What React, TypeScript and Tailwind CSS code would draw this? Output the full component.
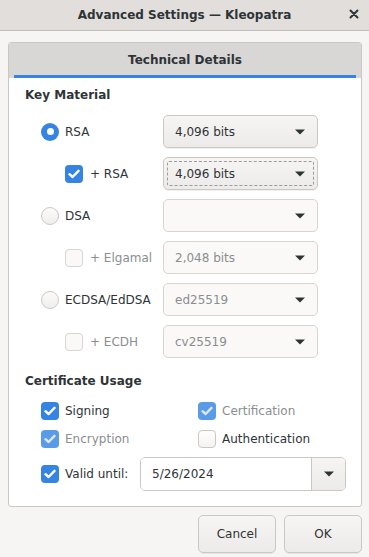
import React from 'react';

const Arrow = () => (
  <svg width="10" height="6" viewBox="0 0 10 6" className="shrink-0">
    <polygon points="0,0.5 10,0.5 5,5.5" fill="#2e3436" />
  </svg>
);

const Check = ({ checked, disabled }: { checked?: boolean; disabled?: boolean }) => {
  if (checked) {
    return (
      <div
        className={`w-[18px] h-[18px] rounded-[4px] flex items-center justify-center shrink-0 ${
          disabled ? 'bg-[#5a9be8]' : 'bg-[#3584e4]'
        }`}
      >
        <svg width="12" height="10" viewBox="0 0 12 10">
          <path
            d="M1.5 5.2 L4.6 8 L10.5 1.8"
            fill="none"
            stroke={disabled ? '#dbe8f9' : '#ffffff'}
            strokeWidth="2.4"
            strokeLinecap="round"
            strokeLinejoin="round"
          />
        </svg>
      </div>
    );
  }
  return (
    <div
      className={`w-[18px] h-[18px] rounded-[4px] border shrink-0 ${
        disabled ? 'border-[#d8d4d0] bg-[#faf9f8]' : 'border-[#cdc7c2] bg-gradient-to-b from-white to-[#f4f3f2]'
      }`}
    />
  );
};

const Radio = ({ checked }: { checked?: boolean }) =>
  checked ? (
    <div className="w-[18px] h-[18px] rounded-full bg-[#3584e4] flex items-center justify-center shrink-0">
      <div className="w-[7px] h-[7px] rounded-full bg-white" />
    </div>
  ) : (
    <div className="w-[18px] h-[18px] rounded-full border border-[#cdc7c2] bg-gradient-to-b from-[#fbfbfa] to-[#efeeec] shrink-0" />
  );

const Combo = ({ value, disabled, focused }: { value: string; disabled?: boolean; focused?: boolean }) => (
  <div
    className={`relative h-[33px] w-[155px] rounded-[5px] border flex items-center justify-between pl-[11px] pr-[12px] ${
      disabled
        ? 'border-[#d8d4d0] bg-[#faf9f8] text-[#8b8e8f]'
        : 'border-[#cdc7c2] bg-gradient-to-b from-[#f6f5f4] to-[#edebe9] text-[#2e3436] shadow-[0_1px_0_rgba(0,0,0,0.06)]'
    }`}
  >
    <span>{value}</span>
    <Arrow />
    {focused && <div className="absolute inset-[3px] border border-dashed border-[#9a9c9d] rounded-[2px]" />}
  </div>
);

export default function App() {
  return (
    <div className="w-[369px] h-[557px] bg-[#f6f5f4] font-['DejaVu_Sans',sans-serif] text-[12px] text-[#2e3436]">
      <div className="relative h-[31px] bg-[#e1dedb] border-b border-[#c0bdb9] flex items-center justify-center">
        <span className="font-bold">Advanced Settings — Kleopatra</span>
        <div className="absolute right-[10px] top-[9px]">
          <svg width="10" height="10" viewBox="0 0 10 10">
            <path d="M1.5 1.5 L8.5 8.5 M8.5 1.5 L1.5 8.5" stroke="#2e3436" strokeWidth="2" strokeLinecap="round" />
          </svg>
        </div>
      </div>

      <div className="ml-[8px] mt-[11px] w-[354px] border border-[#cdc7c2] rounded-[3px] bg-white overflow-hidden">
        <div className="h-[35px] bg-[#d8d7d5] px-[5px] flex">
          <div className="flex-1 border-b-[3px] border-[#3584e4] flex items-center justify-center font-bold pt-[1px]">
            Technical Details
          </div>
        </div>

        <div className="pl-[16px] pt-[8px] pb-[15px]">
          <div className="h-[18px] flex items-center font-bold">Key Material</div>

          <div className="ml-[16px] mt-[11px] grid grid-cols-[122px_155px] gap-y-[9px]">
            <div className="flex items-center gap-[6px]">
              <Radio checked />
              <span>RSA</span>
            </div>
            <Combo value="4,096 bits" />

            <div className="flex items-center gap-[7px] pl-[24px]">
              <Check checked />
              <span>+ RSA</span>
            </div>
            <Combo value="4,096 bits" focused />

            <div className="flex items-center gap-[6px]">
              <Radio />
              <span>DSA</span>
            </div>
            <Combo value="" disabled />

            <div className="flex items-center gap-[7px] pl-[24px]">
              <Check disabled />
              <span className="text-[#8b8e8f]">+ Elgamal</span>
            </div>
            <Combo value="2,048 bits" disabled />

            <div className="flex items-center gap-[6px]">
              <Radio />
              <span>ECDSA/EdDSA</span>
            </div>
            <Combo value="ed25519" disabled />

            <div className="flex items-center gap-[7px] pl-[24px]">
              <Check disabled />
              <span className="text-[#8b8e8f]">+ ECDH</span>
            </div>
            <Combo value="cv25519" disabled />
          </div>

          <div className="mt-[14px] h-[18px] flex items-center font-bold">Certificate Usage</div>

          <div className="ml-[16px]">
            <div className="mt-[12px] h-[18px] flex">
              <div className="w-[157px] flex items-center gap-[6px]">
                <Check checked />
                <span>Signing</span>
              </div>
              <div className="flex items-center gap-[6px]">
                <Check checked disabled />
                <span className="text-[#8b8e8f]">Certification</span>
              </div>
            </div>
            <div className="mt-[10px] h-[18px] flex">
              <div className="w-[157px] flex items-center gap-[6px]">
                <Check checked disabled />
                <span className="text-[#8b8e8f]">Encryption</span>
              </div>
              <div className="flex items-center gap-[6px]">
                <Check />
                <span>Authentication</span>
              </div>
            </div>
            <div className="mt-[9px] h-[34px] flex items-center">
              <div className="w-[99px] flex items-center gap-[6px]">
                <Check checked />
                <span>Valid until:</span>
              </div>
              <div className="w-[206px] h-[34px] rounded-[5px] border border-[#cdc7c2] flex overflow-hidden">
                <div className="flex-1 bg-white flex items-center pl-[11px]">5/26/2024</div>
                <div className="w-[34px] border-l border-[#cdc7c2] bg-gradient-to-b from-[#f6f5f4] to-[#edebe9] flex items-center justify-center">
                  <Arrow />
                </div>
              </div>
            </div>
          </div>
        </div>
      </div>

      <div className="mt-[8px] pr-[7px] flex justify-end gap-[8px]">
        <button className="w-[78px] h-[38px] rounded-[5px] border border-[#cdc7c2] bg-gradient-to-b from-[#f6f5f4] to-[#edebe9] shadow-[0_1px_0_rgba(0,0,0,0.06)]">
          Cancel
        </button>
        <button className="w-[78px] h-[38px] rounded-[5px] border border-[#cdc7c2] bg-gradient-to-b from-[#f6f5f4] to-[#edebe9] shadow-[0_1px_0_rgba(0,0,0,0.06)]">
          OK
        </button>
      </div>
    </div>
  );
}
